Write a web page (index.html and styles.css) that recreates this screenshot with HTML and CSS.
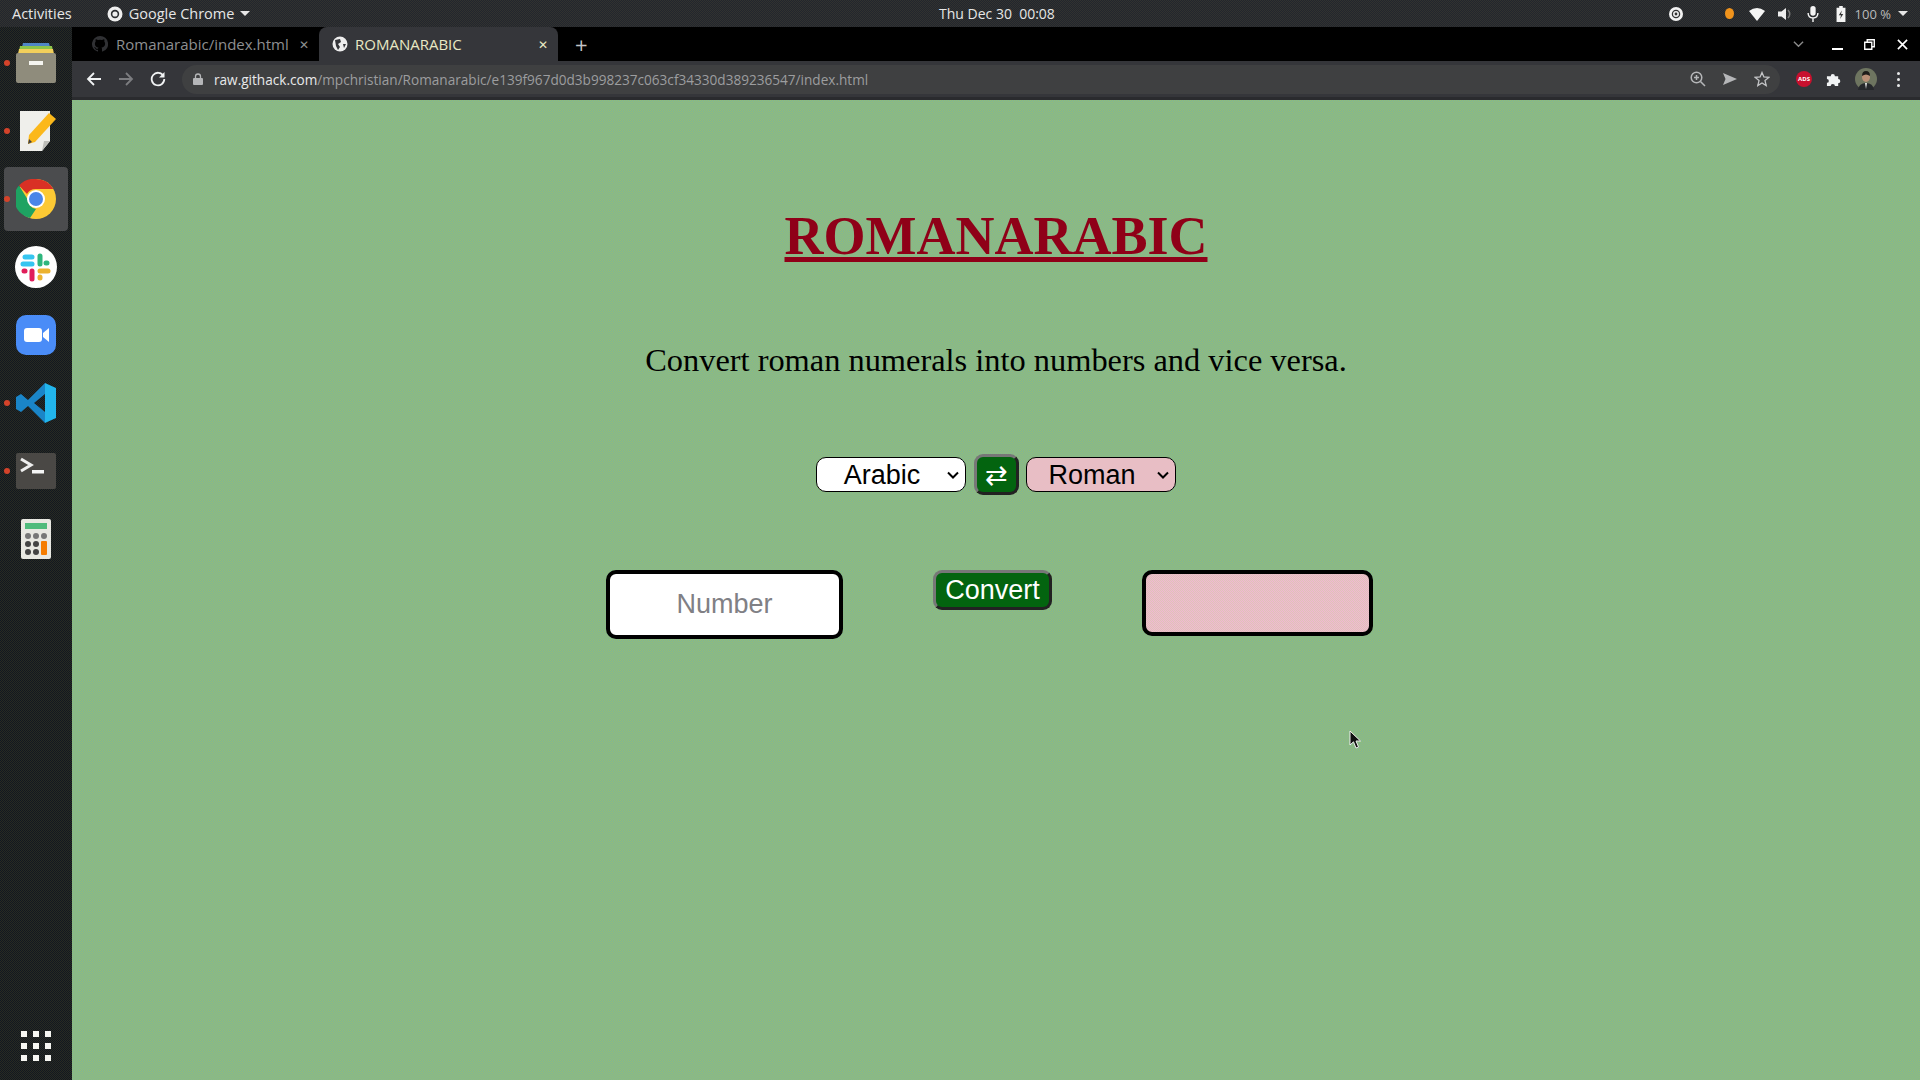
FILE: index.html
```html
<!DOCTYPE html>
<html lang="en">
<head>
  <meta charset="UTF-8">
  <title>ROMANARABIC</title>
  <link rel="stylesheet" href="styles.css">
</head>
<body>
  <header class="topbar">
    <div class="topbar-left">
      <span class="activities">Activities</span>
      <span class="app-menu">
        <svg class="app-menu-icon" viewBox="0 0 16 16"><circle cx="8" cy="8" r="7.5" fill="#eee"/><circle cx="8" cy="8" r="4.2" fill="#2b2d30"/><circle cx="8" cy="8" r="2.6" fill="#eee"/></svg>
        Google Chrome
        <i class="caret"></i>
      </span>
    </div>
    <div class="clock">Thu Dec 30&nbsp;&nbsp;00:08</div>
    <div class="tray">
      <svg class="tray-at" viewBox="0 0 14 14"><circle cx="7" cy="7" r="7" fill="#f2f2f2"/><circle cx="7" cy="7" r="3.6" fill="none" stroke="#333" stroke-width="1.3"/><circle cx="7" cy="7" r="1.4" fill="#333"/></svg>
      <i class="tray-dot"></i>
      <svg class="tray-icon" viewBox="0 0 16 14"><path d="M0 4 Q8 -2 16 4 L8 14 Z" fill="#f4f4f4"/></svg>
      <svg class="tray-icon" viewBox="0 0 16 16"><path d="M1 5.5 H4.5 L9 2 V14 L4.5 10.5 H1 Z" fill="#eee"/><path d="M11 4 Q14.5 8 11 12" fill="none" stroke="#777" stroke-width="1.5"/></svg>
      <svg class="tray-icon" viewBox="0 0 16 18"><rect x="5" y="0" width="6" height="11" rx="3" fill="#f4f4f4"/><path d="M2.5 8 Q2.5 13.5 8 13.5 Q13.5 13.5 13.5 8 M8 13.5 V18" fill="none" stroke="#f4f4f4" stroke-width="1.6"/></svg>
      <svg class="tray-icon" viewBox="0 0 16 18"><path d="M6 0 H10 V2 H13 V18 H3 V2 H6 Z" fill="#f4f4f4"/><path d="M9 5 L5.5 10.5 H8 L7 14.5 L10.5 9 H8 Z" fill="#333"/></svg>
      <span class="battery-text">100 %</span>
      <i class="caret"></i>
    </div>
  </header>

  <div class="desktop">
    <nav class="dock">
      <div class="dock-apps">
        <div class="dock-item running">
          <svg class="dock-icon" viewBox="0 0 40 40"><path d="M7 0 H33 L34 4 H6 Z" fill="#4f86c6"/><path d="M4 3 H36 L37 8 H3 Z" fill="#8bc34a"/><path d="M3 6 H37 L38 11 H2 Z" fill="#f2cf5b"/><rect y="10" width="40" height="30" rx="2" fill="#8f8c7c"/><rect x="13" y="18" width="14" height="4" fill="#f5f5f0"/></svg>
        </div>
        <div class="dock-item running">
          <svg class="dock-icon" viewBox="0 0 40 40"><path d="M4 0 H34 V30 L26 40 H4 Z" fill="#efefeb"/><path d="M26 40 L28 30 H34 Z" fill="#bdbdb8"/><path d="M13 24 L33 2 L40 8 L19 31 L12 33 Z" fill="#fbb81b"/><path d="M12 33 L13 28 L16 31 Z" fill="#444"/></svg>
        </div>
        <div class="dock-item running active">
          <svg class="dock-icon" viewBox="0 0 40 40"><circle cx="20" cy="20" r="20" fill="#fcc934"/><path d="M20 0 A20 20 0 0 1 37.3 10 H20 A10 10 0 0 0 11 15 L3 6.5 A20 20 0 0 1 20 0 Z" fill="#d93025"/><path d="M3 6.5 L12 21 A9 9 0 0 0 20 30 L14 39 A20 20 0 0 1 3 6.5 Z" fill="#1ea362"/><circle cx="20" cy="20" r="9" fill="#fff"/><circle cx="20" cy="20" r="7" fill="#4a86e8"/></svg>
        </div>
        <div class="dock-item">
          <svg class="dock-icon slack" viewBox="0 0 42 42"><circle cx="21" cy="21" r="21" fill="#fff"/><g stroke-width="5" stroke-linecap="round"><path d="M17 11 H10" stroke="#36c5f0"/><path d="M17 18 H8" stroke="#36c5f0"/><path d="M25 10 V18" stroke="#2eb67d"/><path d="M32 17 H31" stroke="#2eb67d"/><path d="M25 25 H33" stroke="#ecb22e"/><path d="M25 32 V31" stroke="#ecb22e"/><path d="M17 25 V33" stroke="#e01e5a"/><path d="M10 25 H9" stroke="#e01e5a"/></g></svg>
        </div>
        <div class="dock-item">
          <svg class="dock-icon" viewBox="0 0 40 40"><rect width="40" height="40" rx="10" fill="#4a8cf7"/><rect x="8" y="13" width="18" height="14" rx="3" fill="#fff"/><path d="M27 18 L33 13 V27 L27 22 Z" fill="#fff"/></svg>
        </div>
        <div class="dock-item running">
          <svg class="dock-icon" viewBox="0 0 40 40"><path d="M29 0 L12 17 L5 11 L0 14 V26 L5 29 L12 23 L29 40 L29 29 L18 20 L29 11 Z" fill="#1a85c8"/><path d="M29 0 L40 5 V35 L29 40 Z" fill="#22b5ec"/></svg>
        </div>
        <div class="dock-item running">
          <svg class="dock-icon" viewBox="0 0 40 36"><rect width="40" height="36" rx="2" fill="#4a4845"/><path d="M5 6 L15 12 L5 18" fill="none" stroke="#eee" stroke-width="3"/><rect x="16" y="17" width="12" height="3.5" fill="#f5f5f5"/></svg>
        </div>
        <div class="dock-item">
          <svg class="dock-icon" viewBox="0 0 40 40"><rect x="5" width="30" height="40" rx="2" fill="#e8e8e2"/><rect x="9" y="4" width="22" height="6" fill="#4fbb7c"/><g fill="#777"><circle cx="12" cy="17" r="3"/><circle cx="20" cy="17" r="3"/><circle cx="28" cy="17" r="3"/></g><g fill="#444"><circle cx="12" cy="25" r="3"/><circle cx="20" cy="25" r="3"/><circle cx="12" cy="33" r="3"/><circle cx="20" cy="33" r="3"/></g><rect x="25" y="22" width="6" height="14" rx="1" fill="#f57c00"/></svg>
        </div>
      </div>
      <div class="show-apps">
        <i></i><i></i><i></i><i></i><i></i><i></i><i></i><i></i><i></i>
      </div>
    </nav>

    <div class="browser">
      <div class="tabstrip">
        <div class="tab">
          <svg class="tab-favicon" viewBox="0 0 16 16"><path d="M8 0a8 8 0 0 0-2.5 15.600c.4 0 .5-.2.5-.4v-1.400c-2.200.5-2.700-1-2.700-1-.4-.9-.9-1.200-.9-1.200-.7-.5.100-.5.100-.5.800.100 1.200.800 1.200.800.700 1.200 1.900.900 2.300.700.100-.5.300-.9.500-1.100-1.800-.2-3.600-.9-3.600-4 0-.9.300-1.600.800-2.100-.1-.2-.4-1 .100-2.100 0 0 .7-.2 2.200.800a7.500 7.500 0 0 1 4 0c1.500-1 2.200-.8 2.200-.8.400 1.100.200 1.900.100 2.100.5.500.800 1.200.800 2.100 0 3.100-1.900 3.800-3.700 4 .3.300.6.800.6 1.500v2.200c0 .2.100.5.600.4A8 8 0 0 0 8 0z" fill="#303134"/></svg>
          <span class="tab-title">Romanarabic/index.html</span>
          <span class="tab-close">✕</span>
        </div>
        <div class="tab tab-active">
          <svg class="tab-favicon" viewBox="0 0 16 16"><circle cx="8" cy="8" r="7.500" fill="#eee"/><path d="M3 4 L8 3 L9 6 L6 8 L8 11 L6 14 L4 10 Z M11 8 L14 8 L12 12 Z" fill="#35363a"/></svg>
          <span class="tab-title">ROMANARABIC</span>
          <span class="tab-close">✕</span>
        </div>
        <span class="new-tab">+</span>
        <div class="window-controls">
          <svg class="win-chevron" viewBox="0 0 12 8"><path d="M1 1.500 L6 6.500 L11 1.500" fill="none" stroke="#8a8a8a" stroke-width="1.500"/></svg>
          <i class="win-min"></i>
          <svg class="win-restore" viewBox="0 0 12 12"><path d="M3.500 0.800 H11.200 V8.500 H8.500 V3.500 H3.500 Z M0.800 3.500 H8.500 V11.200 H0.800 Z" fill="none" stroke="#fff" stroke-width="1.500"/></svg>
          <svg class="win-close" viewBox="0 0 12 12"><path d="M1 1 L11 11 M11 1 L1 11" stroke="#fff" stroke-width="1.800"/></svg>
        </div>
      </div>

      <div class="toolbar">
        <svg class="nav-btn" viewBox="0 0 16 16"><path d="M15 8 H2 M8 2 L2 8 L8 14" fill="none" stroke="#f1f3f4" stroke-width="1.800"/></svg>
        <svg class="nav-btn" viewBox="0 0 16 16"><path d="M1 8 H14 M8 2 L14 8 L8 14" fill="none" stroke="#7c7d80" stroke-width="1.800"/></svg>
        <svg class="nav-btn" viewBox="0 0 16 16"><path d="M13.500 5 A6.300 6.300 0 1 0 14.300 8" fill="none" stroke="#f1f3f4" stroke-width="1.800"/><path d="M14.500 1 V6.500 H9 Z" fill="#f1f3f4"/></svg>
        <div class="omnibox">
          <svg class="lock" viewBox="0 0 10 12"><rect y="5" width="10" height="7" rx="1" fill="#b5b6b8"/><path d="M2.500 5.500 V3.500 A2.500 2.500 0 0 1 7.500 3.500 V5.500" fill="none" stroke="#b5b6b8" stroke-width="1.300"/></svg>
          <span class="url"><b class="url-host">raw.githack.com</b>/mpchristian/Romanarabic/e139f967d0d3b998237c063cf34330d389236547/index.html</span>
          <div class="omni-actions">
            <svg class="omni-icon" viewBox="0 0 16 16"><circle cx="6.500" cy="6.500" r="5.300" fill="none" stroke="#b5b6b8" stroke-width="1.500"/><path d="M10.500 10.500 L15 15 M4 6.500 H9 M6.500 4 V9" stroke="#b5b6b8" stroke-width="1.500"/></svg>
            <svg class="omni-icon" viewBox="0 0 16 16"><path d="M1 2 L15 8 L1 14 L3.500 8 Z" fill="#b5b6b8"/></svg>
            <svg class="omni-icon" viewBox="0 0 16 16"><path d="M8 1.500 L9.900 6 L14.800 6.400 L11 9.600 L12.200 14.500 L8 11.900 L3.800 14.500 L5 9.600 L1.200 6.400 L6.100 6 Z" fill="none" stroke="#c4c5c7" stroke-width="1.300"/></svg>
          </div>
        </div>
        <div class="extensions">
          <span class="ads-badge">ADS</span>
          <svg class="ext-puzzle" viewBox="0 0 16 16"><path d="M1 4.500 H5 A2.200 2.200 0 1 1 9.500 4.500 H13 V7.500 A2.200 2.200 0 1 1 13 12 V15 H9.500 A2 2 0 1 0 5 15 H1 V11.500 A2 2 0 1 0 1 7.500 Z" fill="#f1f3f4"/></svg>
          <svg class="avatar" viewBox="0 0 22 22"><circle cx="11" cy="11" r="11" fill="#6e7560"/><path d="M3 22 Q4 15 11 15 Q18 15 19 22 Z" fill="#26282c"/><path d="M10 15 H12 L11 21 Z" fill="#e8e8e8"/><ellipse cx="11" cy="9" rx="4" ry="5" fill="#b98f76"/><path d="M7 8 Q7 3 11 3 Q15 3 15 8 Q11 5 7 8 Z" fill="#1e1c1a"/></svg>
          <span class="kebab"><i></i><i></i><i></i></span>
        </div>
      </div>

      <main class="page">
        <h1 class="title">ROMANARABIC</h1>
        <p class="tagline">Convert roman numerals into numbers and vice versa.</p>
        <div class="unit-row">
          <select class="unit-select">
            <option>Arabic</option>
            <option>Roman</option>
          </select>
          <button class="btn btn-swap">⇄</button>
          <select class="unit-select unit-select-pink">
            <option>Roman</option>
            <option>Arabic</option>
          </select>
        </div>
        <div class="convert-row">
          <input class="field field-in" type="text" placeholder="Number">
          <button class="btn btn-convert">Convert</button>
          <div class="field field-out"></div>
        </div>
        <svg class="cursor" viewBox="0 0 12 20"><path d="M1 1 V15 L4.500 11.800 L7 18 L9.500 17 L7 11 H11.500 Z" fill="#111" stroke="#eee" stroke-width="1"/></svg>
      </main>
    </div>
  </div>
</body>
</html>
```

FILE: styles.css
```css
* {
  box-sizing: border-box;
}
body {
  margin: 0;
  width: 1920px;
  height: 1080px;
  overflow: hidden;
  display: flex;
  flex-direction: column;
  font-family: "Open Sans", "Noto Sans", sans-serif;
  background: #1e2020;
}

/* gnome top bar */
.topbar {
  height: 27px;
  flex: none;
  display: grid;
  grid-template-columns: 927px auto 1fr;
  align-items: center;
  background: repeating-conic-gradient(#22262e 0 25%, #32322f 0 50%) 0 0 / 2px 2px;
  color: #e6e6e6;
  font-size: 14.5px;
  padding: 0 12px;
}
.topbar-left {
  display: flex;
  align-items: center;
  gap: 35px;
}
.app-menu {
  display: flex;
  align-items: center;
  gap: 6px;
}
.app-menu-icon {
  width: 16px;
  height: 16px;
}
.caret {
  display: inline-block;
  width: 0;
  height: 0;
  border-left: 5px solid transparent;
  border-right: 5px solid transparent;
  border-top: 5px solid #e6e6e6;
}
.clock {
  font-size: 14px;
  white-space: nowrap;
}
.tray {
  display: flex;
  align-items: center;
  justify-content: flex-end;
}
.tray-at {
  width: 14px;
  height: 14px;
  margin-right: 42px;
}
.tray-dot {
  width: 9px;
  height: 11px;
  border-radius: 50%;
  background: #f0931c;
  margin-right: 15px;
}
.tray-icon {
  width: 16px;
  height: 16px;
  margin-right: 12px;
}
.battery-text {
  color: #b9babb;
  font-size: 13px;
  margin: 0 7px 0 -6px;
}

.desktop {
  flex: 1;
  display: flex;
  min-height: 0;
}

/* dock */
.dock {
  width: 72px;
  flex: none;
  display: flex;
  flex-direction: column;
  justify-content: space-between;
  background: repeating-conic-gradient(#131820 0 25%, #282a22 0 50%) 0 0 / 2px 2px;
  padding: 2px 0 19px;
}
.dock-apps {
  display: flex;
  flex-direction: column;
}
.dock-item {
  height: 64px;
  margin: 2px 4px;
  display: flex;
  align-items: center;
  justify-content: center;
  position: relative;
  border-radius: 4px;
}
.dock-item.active {
  background: #4b4c4e;
}
.dock-item.running::before {
  content: "";
  position: absolute;
  left: 0;
  top: 29px;
  width: 6px;
  height: 6px;
  border-radius: 50%;
  background: #d5432a;
}
.dock-icon {
  width: 40px;
  height: 40px;
}
.slack {
  width: 42px;
  height: 42px;
}
.show-apps {
  display: grid;
  grid-template-columns: repeat(3, 6px);
  gap: 6px;
  justify-content: center;
}
.show-apps i {
  height: 6px;
  background: #f6f6f2;
}

/* chrome */
.browser {
  flex: 1;
  min-width: 0;
  display: flex;
  flex-direction: column;
}
.tabstrip {
  height: 34px;
  flex: none;
  display: flex;
  align-items: stretch;
  background: #000;
  font-size: 15px;
}
.tab {
  width: 247px;
  display: flex;
  align-items: center;
  gap: 8px;
  padding: 0 10px 0 20px;
  color: #8e8f91;
  border-radius: 8px 8px 0 0;
}
.tab-active {
  width: 239px;
  padding-left: 13px;
  gap: 7px;
  background: #35363a;
  color: #e8e8c4;
}
.tab-favicon {
  width: 16px;
  height: 16px;
  flex: none;
}
.tab-title {
  flex: 1;
  margin-right: 3px;
  white-space: nowrap;
  overflow: hidden;
}
.tab-close {
  font-size: 12px;
}
.new-tab {
  margin-left: 17px;
  align-self: center;
  color: #c4c5c7;
  font-size: 22px;
  line-height: 1;
}
.window-controls {
  margin-left: auto;
  display: flex;
  align-items: center;
  padding-right: 12px;
}
.win-chevron {
  width: 11px;
  height: 8px;
  margin-right: 28px;
}
.win-min {
  width: 11px;
  height: 2px;
  margin: 9px 21px 0 0;
  background: #fff;
}
.win-restore {
  width: 11px;
  height: 11px;
  margin-right: 22px;
}
.win-close {
  width: 11px;
  height: 11px;
}
.toolbar {
  height: 39px;
  flex: none;
  display: flex;
  align-items: center;
  gap: 16px;
  padding: 0 14px;
  background: #35363a;
  border-bottom: 3px solid #2a2b2e;
}
.nav-btn {
  width: 16px;
  height: 16px;
  flex: none;
}
.omnibox {
  width: 1598px;
  height: 29px;
  flex: none;
  display: flex;
  align-items: center;
  padding: 0 10px 0 11px;
  border-radius: 15px;
  background: #3f4041;
  font-size: 13.6px;
  color: #9c9d9f;
}
.lock {
  width: 10px;
  height: 12px;
  margin-right: 11px;
}
.url {
  white-space: nowrap;
}
.url-host {
  font-weight: 400;
  color: #e8e9ea;
}
.omni-actions {
  margin-left: auto;
  display: flex;
  gap: 16px;
}
.omni-icon {
  width: 16px;
  height: 16px;
}
.extensions {
  display: flex;
  align-items: center;
  flex: none;
  gap: 14px;
}
.ads-badge {
  width: 16px;
  height: 16px;
  border-radius: 50%;
  background: #c8102e;
  color: #fff;
  font-size: 6px;
  font-weight: 700;
  line-height: 16px;
  text-align: center;
}
.ext-puzzle {
  width: 15px;
  height: 15px;
}
.avatar {
  width: 22px;
  height: 22px;
}
.kebab {
  display: flex;
  flex-direction: column;
  gap: 3px;
  margin-left: 6px;
}
.kebab i {
  width: 3px;
  height: 3px;
  border-radius: 50%;
  background: #e8e9ea;
}

/* the app itself */
.page {
  flex: 1;
  position: relative;
  display: flex;
  flex-direction: column;
  align-items: center;
  background: repeating-conic-gradient(#7cb49a 0 25%, #98be72 0 50%) 0 0 / 2px 2px;
  font-family: "Liberation Serif", serif;
}
.title {
  margin: 105px 0 0;
  font-size: 54px;
  line-height: 62px;
  font-weight: 700;
  color: #8f0018;
  text-decoration: underline;
}
.tagline {
  margin: 75px 0 0;
  font-size: 32.4px;
  line-height: 37px;
  color: #000;
}
.unit-row {
  margin-top: 75px;
  display: flex;
  align-items: center;
  gap: 8px;
}
.unit-select {
  appearance: none;
  width: 150px;
  height: 35px;
  padding: 0 18px 0 0;
  border: 1px solid #000;
  border-radius: 10px;
  background: #fff url("data:image/svg+xml,%3Csvg xmlns='http://www.w3.org/2000/svg' width='12' height='8'%3E%3Cpath d='M1 1.500 L6 6.500 L11 1.500' fill='none' stroke='%23000' stroke-width='2'/%3E%3C/svg%3E") no-repeat right 6px center;
  color: #000;
  font-family: "Liberation Sans", sans-serif;
  font-size: 27px;
  text-align: center;
}
.unit-select-pink {
  margin-left: -1px;
  background-color: #e8bec5;
}
.btn {
  border: 3px outset #777;
  border-radius: 9px;
  background: #03640f;
  color: #fff;
  font-family: "Liberation Sans", sans-serif;
  font-size: 27px;
  padding: 0;
}
.btn-swap {
  width: 45px;
  height: 41px;
}
.convert-row {
  margin: 75px 13px 0 0;
  display: flex;
  align-items: flex-start;
}
.field {
  border: 4px solid #000;
  border-radius: 10px;
}
.field-in {
  width: 237px;
  height: 69px;
  background: #fff;
  text-align: center;
  font-family: "Liberation Sans", sans-serif;
  font-size: 27px;
}
.field-in::placeholder {
  color: #808085;
}
.btn-convert {
  width: 119px;
  height: 40px;
  margin: 0 90px;
}
.field-out {
  width: 231px;
  height: 66px;
  background: repeating-conic-gradient(#f0b8d4 0 25%, #e0c4b6 0 50%) 0 0 / 2px 2px;
}
.cursor {
  position: absolute;
  left: 1277px;
  top: 630px;
  width: 12px;
  height: 20px;
}
```
